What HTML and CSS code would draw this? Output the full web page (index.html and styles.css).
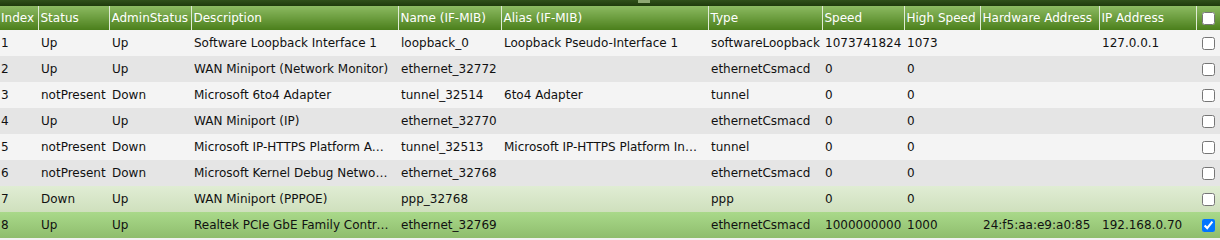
FILE: index.html
```html
<!DOCTYPE html>
<html>
<head>
<meta charset="utf-8">
<link rel="stylesheet" href="styles.css">
</head>
<body>
<div class="topbar"><span class="grip"></span></div>
<table class="iftable">
  <colgroup>
    <col class="c-index"><col class="c-status"><col class="c-admin"><col class="c-desc"><col class="c-name"><col class="c-alias"><col class="c-type"><col class="c-speed"><col class="c-hspeed"><col class="c-hw"><col class="c-ip"><col class="c-chk">
  </colgroup>
  <thead>
    <tr>
      <th>Index</th><th>Status</th><th>AdminStatus</th><th>Description</th><th>Name (IF-MIB)</th><th>Alias (IF-MIB)</th><th>Type</th><th>Speed</th><th>High Speed</th><th>Hardware Address</th><th>IP Address</th><th class="chk"><input type="checkbox"></th>
    </tr>
  </thead>
  <tbody>
    <tr class="odd"><td>1</td><td>Up</td><td>Up</td><td class="ell">Software Loopback Interface 1</td><td>loopback_0</td><td class="ell">Loopback Pseudo-Interface 1</td><td>softwareLoopback</td><td>1073741824</td><td>1073</td><td></td><td>127.0.0.1</td><td class="chk"><input type="checkbox"></td></tr>
    <tr class="even"><td>2</td><td>Up</td><td>Up</td><td class="ell">WAN Miniport (Network Monitor)</td><td>ethernet_32772</td><td class="ell"></td><td>ethernetCsmacd</td><td>0</td><td>0</td><td></td><td></td><td class="chk"><input type="checkbox"></td></tr>
    <tr class="odd"><td>3</td><td>notPresent</td><td>Down</td><td class="ell">Microsoft 6to4 Adapter</td><td>tunnel_32514</td><td class="ell">6to4 Adapter</td><td>tunnel</td><td>0</td><td>0</td><td></td><td></td><td class="chk"><input type="checkbox"></td></tr>
    <tr class="even"><td>4</td><td>Up</td><td>Up</td><td class="ell">WAN Miniport (IP)</td><td>ethernet_32770</td><td class="ell"></td><td>ethernetCsmacd</td><td>0</td><td>0</td><td></td><td></td><td class="chk"><input type="checkbox"></td></tr>
    <tr class="odd"><td>5</td><td>notPresent</td><td>Down</td><td class="ell">Microsoft IP-HTTPS Platform Adapter</td><td>tunnel_32513</td><td class="ell">Microsoft IP-HTTPS Platform Interface</td><td>tunnel</td><td>0</td><td>0</td><td></td><td></td><td class="chk"><input type="checkbox"></td></tr>
    <tr class="even"><td>6</td><td>notPresent</td><td>Down</td><td class="ell">Microsoft Kernel Debug Network Adapter</td><td>ethernet_32768</td><td class="ell"></td><td>ethernetCsmacd</td><td>0</td><td>0</td><td></td><td></td><td class="chk"><input type="checkbox"></td></tr>
    <tr class="hover"><td>7</td><td>Down</td><td>Up</td><td class="ell">WAN Miniport (PPPOE)</td><td>ppp_32768</td><td class="ell"></td><td>ppp</td><td>0</td><td>0</td><td></td><td></td><td class="chk"><input type="checkbox"></td></tr>
    <tr class="selected"><td>8</td><td>Up</td><td>Up</td><td class="ell">Realtek PCIe GbE Family Controller</td><td>ethernet_32769</td><td class="ell"></td><td>ethernetCsmacd</td><td>1000000000</td><td>1000</td><td>24:f5:aa:e9:a0:85</td><td>192.168.0.70</td><td class="chk"><input type="checkbox" checked></td></tr>
  </tbody>
</table>
</body>
</html>
```
FILE: styles.css
```css
html, body {
  margin: 0;
  padding: 0;
  background: #f2f2f2;
}
body {
  font-family: "DejaVu Sans", Verdana, sans-serif;
  font-size: 12px;
  color: #111;
  width: 1220px;
  overflow: hidden;
}
.topbar {
  height: 6px;
  background: linear-gradient(#30501a, #1f3a0c);
  display: flex;
  justify-content: center;
  padding-left: 68px;
  box-sizing: border-box;
}
.grip {
  display: block;
  width: 12px;
  height: 3px;
  background: #8ea872;
}
.iftable {
  width: 1220px;
  table-layout: fixed;
  border-collapse: collapse;
  border-spacing: 0;
}
.c-index { width: 38px; }
.c-status { width: 71px; }
.c-admin { width: 82px; }
.c-desc { width: 207px; }
.c-name { width: 103px; }
.c-alias { width: 207px; }
.c-type { width: 114px; }
.c-speed { width: 82px; }
.c-hspeed { width: 76px; }
.c-hw { width: 119px; }
.c-ip { width: 97px; }
.c-chk { width: 24px; }

.iftable th {
  height: 24px;
  padding: 0 0 0 2px;
  text-align: left;
  font-weight: normal;
  color: #fff;
  white-space: nowrap;
  overflow: hidden;
  background: linear-gradient(#8cba62, #4b7f1b);
  border-left: 1px solid rgba(210, 230, 190, 0.55);
}
.iftable th:first-child {
  border-left: none;
  padding-left: 1px;
}
.iftable td {
  height: 26px;
  padding: 0 0 0 3px;
  white-space: nowrap;
  overflow: hidden;
  text-overflow: ellipsis;
}
.iftable td.ell {
  padding-right: 9px;
}
.iftable td:first-child {
  padding-left: 1px;
}
.iftable .chk {
  text-align: center;
  padding: 0;
  text-overflow: clip;
}
.chk input {
  margin: 0;
  width: 13px;
  height: 13px;
  vertical-align: middle;
}
tr.odd td { background: #f4f4f4; }
tr.even td { background: #e5e5e5; }
tr.hover td { background: linear-gradient(#e0edd4, #cfe0bd); }
tr.selected td { background: linear-gradient(#a9d98a, #8fbd6d); }
```
